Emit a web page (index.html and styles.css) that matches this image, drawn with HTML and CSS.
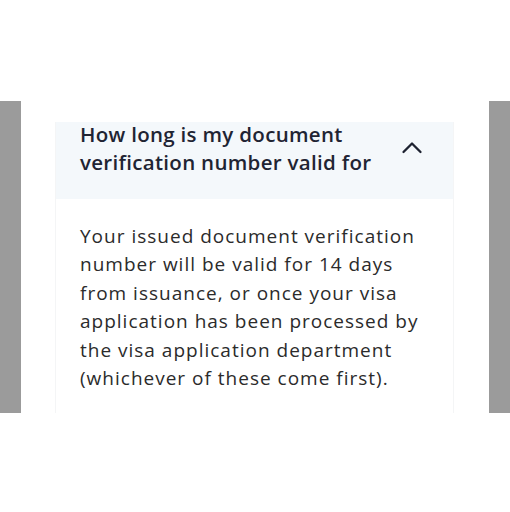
FILE: index.html
```html
<!DOCTYPE html>
<html lang="en">
<head>
<meta charset="utf-8">
<link rel="stylesheet" href="styles.css">
</head>
<body>
<div class="stage">
  <div class="side-bar"></div>
  <section class="faq-card">
    <div class="faq-head">
      <h2 class="faq-question">How long is my document<br>verification number valid for</h2>
      <svg class="chevron" width="22" height="14" viewBox="0 0 22 14" aria-hidden="true">
        <path d="M2.5 12 L11 3.5 L19.5 12" fill="none" stroke="#1d2230" stroke-width="2.3" stroke-linecap="round" stroke-linejoin="round"/>
      </svg>
    </div>
    <div class="faq-body">
      <p class="faq-answer">Your issued document verification<br>number will be valid for 14 days<br>from issuance, or once your visa<br>application has been processed by<br>the visa application department<br>(whichever of these come first).</p>
    </div>
  </section>
  <div class="side-bar"></div>
</div>
</body>
</html>
```

FILE: styles.css
```css
html, body {
  margin: 0;
  padding: 0;
  background: #ffffff;
}

.stage {
  display: flex;
  align-items: flex-start;
  padding-top: 101px;
}

.side-bar {
  width: 21px;
  height: 312px;
  background: #9b9b9b;
  flex: none;
}

.faq-card {
  width: 399px;
  height: 291px;
  margin: 21px 35px 0 34px;
  box-sizing: border-box;
  border-left: 1px solid #f4f5f6;
  border-right: 1px solid #f4f5f6;
  display: flex;
  flex-direction: column;
  flex: none;
}

.faq-head {
  height: 77px;
  box-sizing: border-box;
  background: #f4f8fb;
  display: flex;
  justify-content: space-between;
  align-items: flex-start;
  padding: 0 30px 0 24px;
}

.faq-question {
  margin: -2px 0 0 0;
  font-family: "Open Sans", "Noto Sans", sans-serif;
  font-weight: 600;
  font-size: 20.5px;
  line-height: 28px;
  letter-spacing: 0.3px;
  color: #1f2433;
}

.chevron {
  margin-top: 18px;
}

.faq-body {
  padding: 23px 20px 0 24px;
}

.faq-answer {
  margin: 0;
  font-family: "Open Sans", "Noto Sans", sans-serif;
  font-weight: 400;
  font-size: 19px;
  line-height: 28.4px;
  letter-spacing: 1px;
  color: #2b2b2b;
}
```
